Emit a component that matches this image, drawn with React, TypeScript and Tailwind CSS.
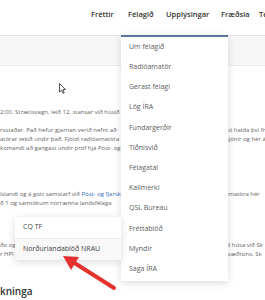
const menu = [
  'Um félagið',
  'Radíóamatör',
  'Gerast félagi',
  'Lög ÍRA',
  'Fundargerðir',
  'Tíðnisvið',
  'Félagatal',
  'Kallmerki',
  'QSL Bureau',
  'Fréttablöð',
  'Myndir',
  'Saga ÍRA',
]

function Row({ left, right }: { left: React.ReactNode; right?: string }) {
  return (
    <div className="grid h-[9px] grid-cols-[121px_104px_1fr] overflow-hidden whitespace-nowrap">
      <div className="overflow-hidden">{left}</div>
      <div />
      <div className="overflow-hidden">{right}</div>
    </div>
  )
}

export default function App() {
  return (
    <div className="relative h-[300px] w-[265px] overflow-hidden bg-white font-['Open_Sans',sans-serif]">
      <header className="h-[36px] border-b border-[#e4e4e4]">
        <nav className="flex whitespace-nowrap pl-[91px] pt-[9px] text-[7.5px] font-semibold leading-[10px] text-[#333]">
          <span className="w-[37px] shrink-0">Fréttir</span>
          <span className="w-[38px] shrink-0">Félagið</span>
          <span className="w-[55px] shrink-0">Upplýsingar</span>
          <span className="w-[38px] shrink-0">Fræðsla</span>
          <span className="shrink-0">Tenglar</span>
        </nav>
      </header>
      <div className="h-[30px] border-b border-[#ebebeb] bg-[#f7f7f7]" />

      <main className="text-[6px] leading-[9px] text-[#666]">
        <div className="mt-[42px]">
          <Row left="2:00. Strætisvagn, leið 12, stansar við húsið" />
        </div>
        <div className="mt-[9px]">
          <Row left="rsstaðar. Það hefur gjarnan verið nefnt að" right="þó halda því fram" />
          <Row left="atörar tekið undir það. Fjöldi radíóamatöra" right="þjónir og hér á" />
          <Row left="komandi að gangast undir próf hjá Póst- og" />
        </div>
        <div className="mt-[37px]">
          <Row
            left={
              <>
                íslandi og á gott samstarf við{' '}
                <span className="text-[#2f6db5]">Póst- og fjarskiptastofnun</span>
              </>
            }
            right="amatöra hér"
          />
          <Row left="ð 1 og samtökum norrænna landsfélaga" />
        </div>
        <div className="mt-[33px]">
          <Row left="ðo og fleiri" right="til húsa við Sk" />
          <Row left="r HPI stöð" right="svæðisins. Sk" />
        </div>
        <h2 className="mt-[26px] whitespace-nowrap text-[10px] font-semibold leading-[12px] text-[#333]">
          kninga
        </h2>
      </main>

      <div className="absolute left-[121px] top-[35px] w-[107px] border-t-2 border-[#56779b] bg-white pb-[2px] shadow-[0_2px_8px_rgba(0,0,0,0.14)]">
        {menu.map((item) => (
          <div
            key={item}
            className="flex h-[20.2px] items-center whitespace-nowrap pl-[8px] text-[7px] text-[#5c5c5c]"
          >
            {item}
          </div>
        ))}
      </div>

      <div className="absolute left-[15px] top-[217px] w-[106px] bg-white shadow-[0_2px_8px_rgba(0,0,0,0.14)]">
        <div className="flex h-[22px] items-center border-b border-[#eaeaea] pl-[8px] text-[7px] text-[#444]">
          CQ TF
        </div>
        <div className="flex h-[21px] items-center whitespace-nowrap bg-[#f8f8f8] pl-[8px] text-[7px] text-[#444]">
          Norðurlandablöð NRAU
        </div>
      </div>

      <svg className="absolute left-[59px] top-[83px]" width="7" height="11" viewBox="0 0 7 11">
        <path d="M0.5 0.5 L0.5 9 L2.6 7.1 L4 10.3 L5.2 9.8 L3.9 6.7 L6.5 6.6 Z" fill="#fff" stroke="#222" strokeWidth="0.8" strokeLinejoin="round" />
      </svg>

      <svg className="pointer-events-none absolute inset-0" width="265" height="300" viewBox="0 0 265 300">
        <line x1="114" y1="288" x2="73" y2="262" stroke="#e5322f" strokeWidth="4" strokeLinecap="round" />
        <polygon points="63,256 79,257 71,270" fill="#e5322f" />
      </svg>
    </div>
  )
}
